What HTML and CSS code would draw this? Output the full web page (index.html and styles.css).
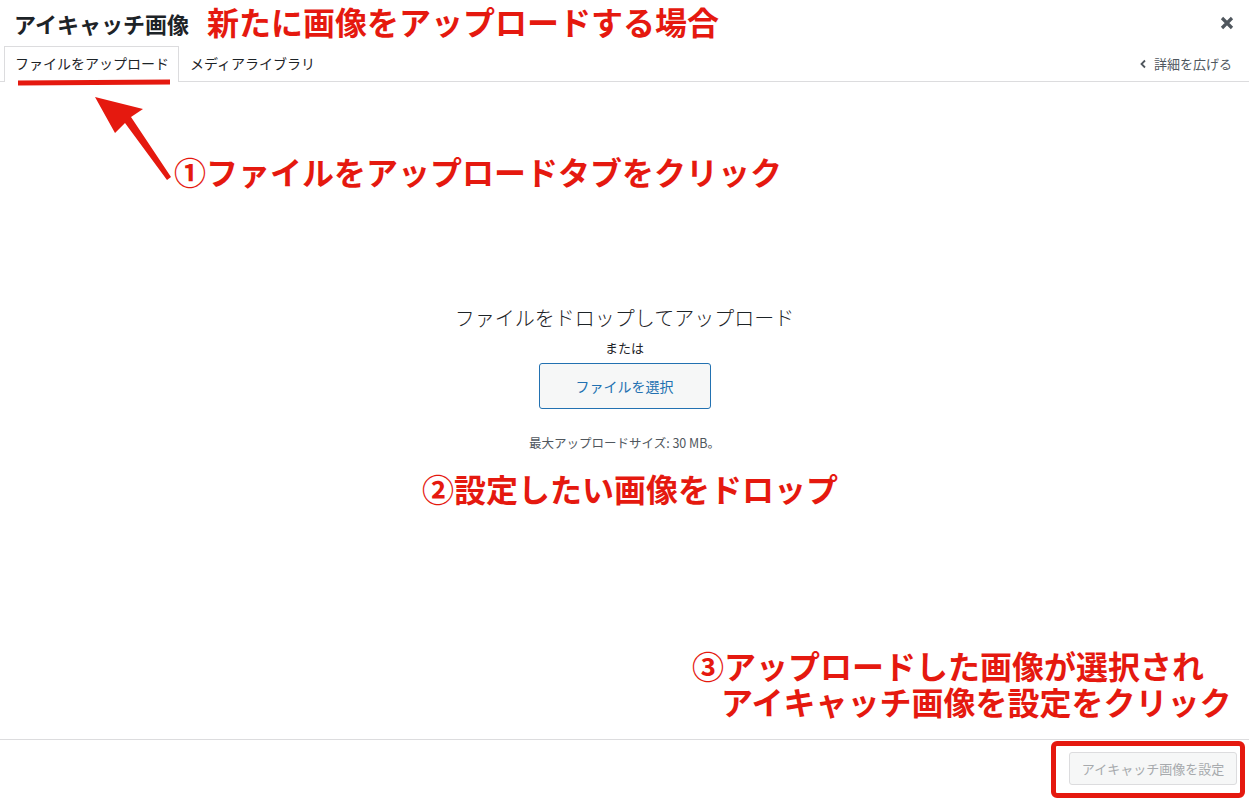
FILE: index.html
```html
<!DOCTYPE html>
<html lang="ja">
<head>
    <meta charset="UTF-8">
    <meta name="viewport" content="width=device-width, initial-scale=1.0">
    <title>アイキャッチ画像</title>
    <link rel="stylesheet" href="styles.css">
</head>
<body>
    <div class="modal">
        <header class="modal-head">
            <h1>アイキャッチ画像</h1>
            <span class="note note-title">新たに画像をアップロードする場合</span>
            <button class="close" aria-label="閉じる">
                <svg width="14" height="14" viewBox="0 0 14 14">
                    <path d="M2 2 L12 12 M12 2 L2 12" stroke="#50575e" stroke-width="3.2" stroke-linecap="butt"/>
                </svg>
            </button>
        </header>

        <nav class="tabs">
            <a class="tab active">ファイルをアップロード</a>
            <a class="tab">メディアライブラリ</a>
            <a class="expand">
                <svg width="8" height="10" viewBox="0 0 8 10">
                    <path d="M6 1.5 L2.5 5 L6 8.5" fill="none" stroke="#50575e" stroke-width="1.8"/>
                </svg>
                詳細を広げる
            </a>
        </nav>

        <main class="uploader">
            <div class="drop-zone">
                <h2>ファイルをドロップしてアップロード</h2>
                <p class="or">または</p>
                <button class="select-btn">ファイルを選択</button>
                <p class="max-size">最大アップロードサイズ: 30 MB。</p>
            </div>
        </main>

        <footer class="toolbar">
            <button class="set-btn" disabled>アイキャッチ画像を設定</button>
        </footer>

        <!-- annotations drawn over the screen -->
        <span class="tab-mark"></span>
        <svg class="arrow" width="90" height="100" viewBox="0 0 90 100">
            <polygon points="0,0 48,12 36,20 76,80 72,83 30,26 20,36" fill="#e5190f"/>
        </svg>
        <span class="note note-one">①ファイルをアップロードタブをクリック</span>
        <span class="note note-two">②設定したい画像をドロップ</span>
        <span class="note note-three">
            <span class="line">③アップロードした画像が選択され</span>
            <span class="line indent">アイキャッチ画像を設定をクリック</span>
        </span>
        <span class="btn-mark"></span>
    </div>
</body>
</html>
```

FILE: styles.css
```css
* {
    margin: 0;
    padding: 0;
    box-sizing: border-box;
}

body {
    font-family: "Noto Sans CJK JP", "Noto Sans", sans-serif;
    background-color: #fff;
    color: #1d2327;
    height: 100vh;
    overflow: hidden;
}

.modal {
    position: relative;
    height: 100vh;
    display: flex;
    flex-direction: column;
}

.modal-head {
    height: 46px;
    display: flex;
    align-items: center;
    padding: 0 14px;
}

.modal-head h1 {
    font-size: 22px;
    font-weight: 700;
    color: #1d2327;
}

.close {
    margin-left: auto;
    background: none;
    border: none;
    width: 14px;
    height: 14px;
    margin-right: 1px;
    display: flex;
}

.tabs {
    height: 36px;
    display: flex;
    align-items: flex-end;
    padding: 0 4px;
    border-bottom: 1px solid #dcdcde;
}

.tab {
    font-size: 14px;
    color: #1d2327;
    padding: 0 10px;
    height: 36px;
    line-height: 33px;
    border: 1px solid transparent;
    border-bottom: none;
    margin-bottom: -1px;
}

.tab.active {
    border-color: #dcdcde;
    background-color: #fff;
    padding-right: 9px;
}

.expand {
    margin-left: auto;
    margin-right: 13px;
    align-self: center;
    font-size: 13px;
    color: #50575e;
    display: flex;
    align-items: center;
    gap: 7px;
}

.uploader {
    flex: 1;
    display: flex;
    justify-content: center;
}

.drop-zone {
    padding-top: 221px;
    text-align: center;
}

.drop-zone h2 {
    font-size: 20px;
    font-weight: 300;
    line-height: 30px;
    color: #1d2327;
}

.or {
    font-size: 13px;
    line-height: 18px;
    margin-top: 6px;
    color: #1d2327;
}

.select-btn {
    margin-top: 6px;
    width: 172px;
    height: 46px;
    font-family: inherit;
    font-size: 14px;
    color: #2271b1;
    background-color: #f6f7f7;
    border: 1px solid #2271b1;
    border-radius: 3px;
}

.max-size {
    margin-top: 24px;
    font-size: 12.5px;
    color: #50575e;
}

.toolbar {
    height: 60px;
    border-top: 1px solid #dcdcde;
    display: flex;
    align-items: center;
    justify-content: flex-end;
    padding: 0 12px 2px;
}

.set-btn {
    width: 168px;
    height: 33px;
    font-family: inherit;
    font-size: 13px;
    color: #a7aaad;
    background-color: #f6f7f7;
    border: 1px solid #dcdcde;
    border-radius: 3px;
}

/* annotations */
.note {
    position: absolute;
    font-family: "Noto Sans CJK JP", sans-serif;
    font-weight: 700;
    font-size: 32px;
    color: #e5190f;
    white-space: nowrap;
    line-height: 36px;
}

.note-title {
    position: static;
    margin-left: 18px;
    margin-top: -4px;
}

.note-one {
    left: 174px;
    top: 153px;
}

.note-two {
    left: 422px;
    top: 470px;
}

.note-three {
    left: 692px;
    top: 647px;
}

.note-three .line {
    display: block;
}

.note-three .indent {
    padding-left: 29px;
}

.tab-mark {
    position: absolute;
    left: 18px;
    top: 80px;
    width: 152px;
    height: 5px;
    background-color: #e5190f;
    transform: rotate(-0.4deg);
}

.arrow {
    position: absolute;
    left: 95px;
    top: 97px;
}

.btn-mark {
    position: absolute;
    left: 1051px;
    top: 741px;
    width: 194px;
    height: 57px;
    border: 5px solid #e5190f;
    border-radius: 6px;
}
```
